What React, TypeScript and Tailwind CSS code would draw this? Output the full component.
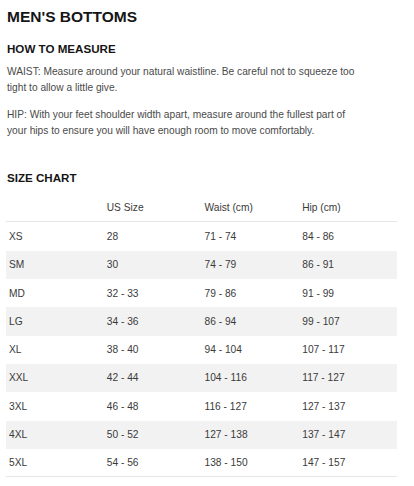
import React from "react";

const rows = [
  ["XS", "28", "71 - 74", "84 - 86"],
  ["SM", "30", "74 - 79", "86 - 91"],
  ["MD", "32 - 33", "79 - 86", "91 - 99"],
  ["LG", "34 - 36", "86 - 94", "99 - 107"],
  ["XL", "38 - 40", "94 - 104", "107 - 117"],
  ["XXL", "42 - 44", "104 - 116", "117 - 127"],
  ["3XL", "46 - 48", "116 - 127", "127 - 137"],
  ["4XL", "50 - 52", "127 - 138", "137 - 147"],
  ["5XL", "54 - 56", "138 - 150", "147 - 157"],
];

export default function App() {
  return (
    <div
      className="w-[414px] h-[486px] bg-white overflow-hidden"
      style={{ fontFamily: '"Liberation Sans", Arial, sans-serif' }}
    >
      <div className="pt-[8px] pl-[7px]">
        <h1 className="text-[15.5px] leading-[1.15] font-bold text-[#151515]">MEN'S BOTTOMS</h1>
        <h2 className="mt-[16px] text-[11.6px] leading-[1.15] font-bold text-[#151515]">HOW TO MEASURE</h2>
        <div className="mt-[9px] w-[350px] text-[10.2px] leading-[16px] text-[#4a4a4a]">
          <p>WAIST: Measure around your natural waistline. Be careful not to squeeze too tight to allow a little give.</p>
          <p className="mt-[11px]">HIP: With your feet shoulder width apart, measure around the fullest part of your hips to ensure you will have enough room to move comfortably.</p>
        </div>
        <h2 className="mt-[32px] text-[11.6px] leading-[1.15] font-bold text-[#151515]">SIZE CHART</h2>
      </div>
      <div className="ml-[6px] w-[391px] mt-[10px] text-[10.2px] text-[#3a3a3a]">
        <div className="grid grid-cols-4 h-[28px] items-center border-b border-[#e6e6e6]">
          <div className="px-[3px]"></div>
          <div className="px-[3px]">US Size</div>
          <div className="px-[3px]">Waist (cm)</div>
          <div className="px-[3px]">Hip (cm)</div>
        </div>
        {rows.map((r, i) => (
          <div
            key={r[0]}
            className={`grid grid-cols-4 h-[28.3px] items-center ${i % 2 === 1 ? "bg-[#f2f2f2]" : "bg-white"} ${i === rows.length - 1 ? "border-b border-[#e6e6e6]" : ""}`}
          >
            {r.map((c, j) => (
              <div key={j} className="px-[3px]">{c}</div>
            ))}
          </div>
        ))}
      </div>
    </div>
  );
}
